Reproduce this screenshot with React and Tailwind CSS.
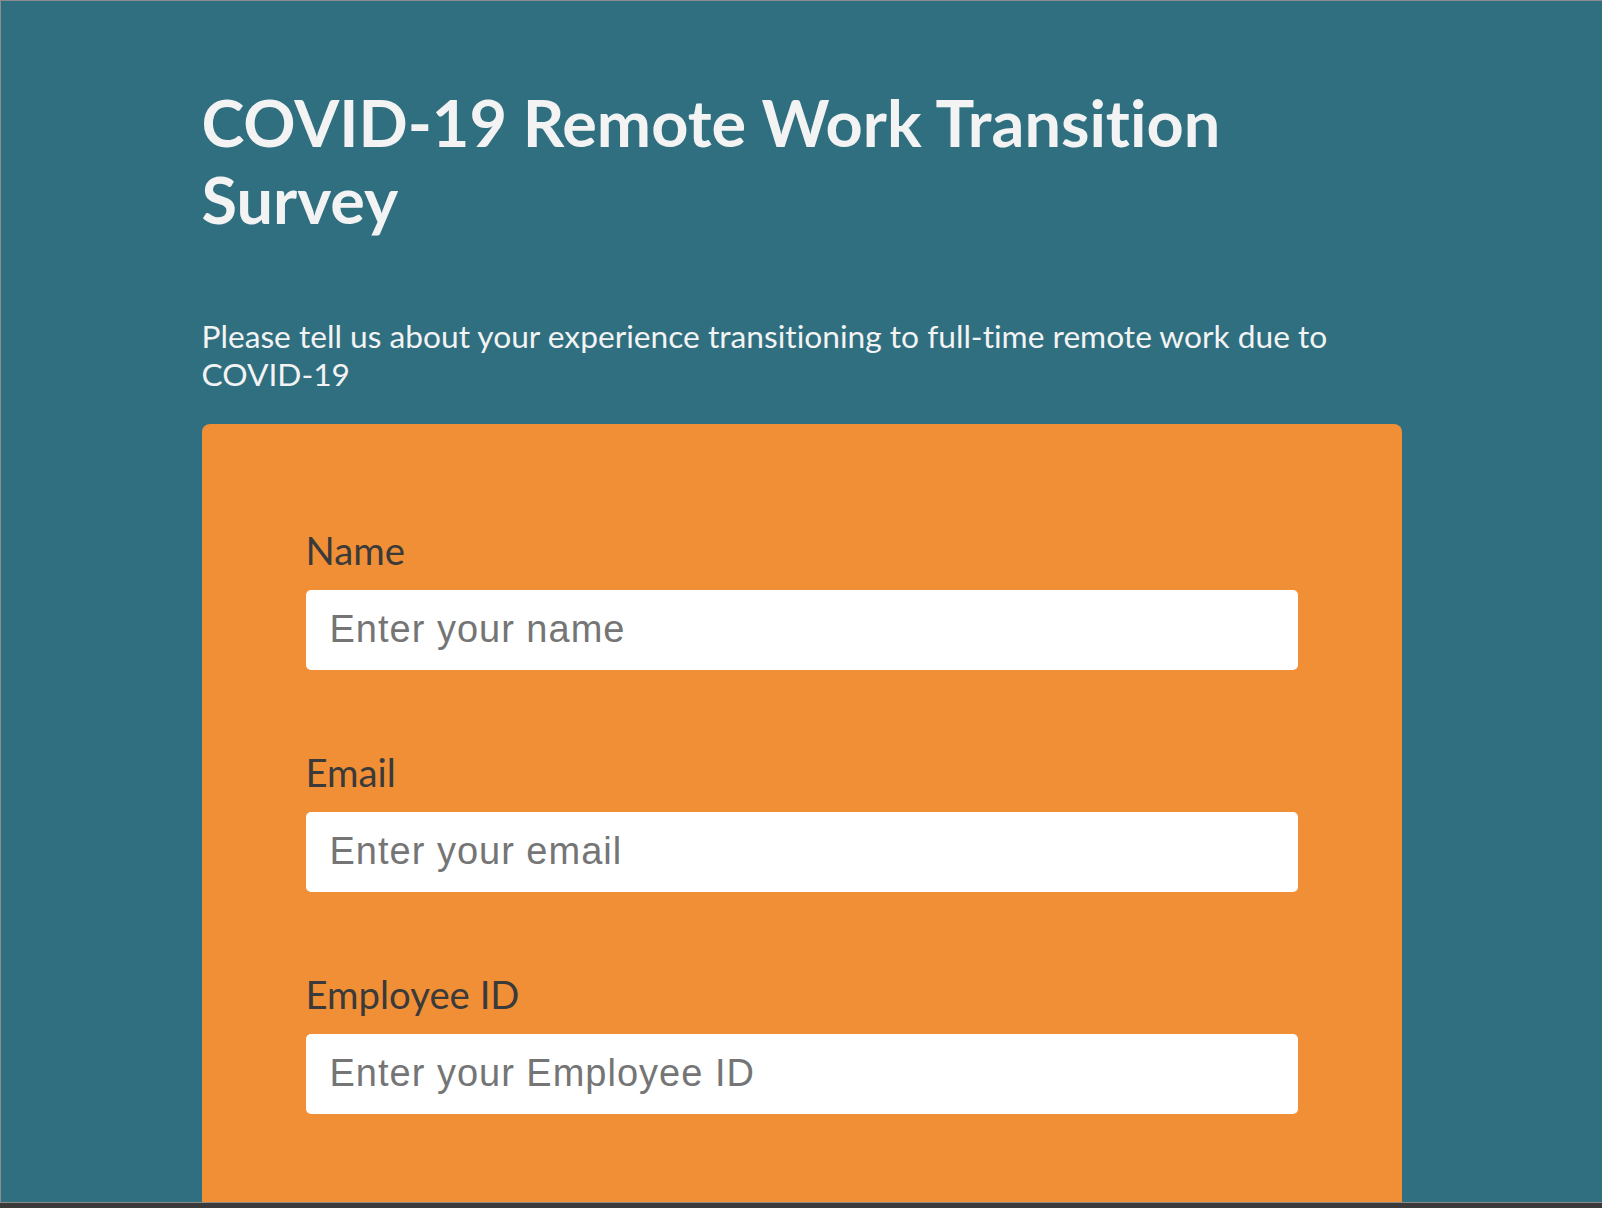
import { useState } from "react"

// Campos del formulario de la encuesta
const fields = [
  { id: "name", label: "Name", type: "text", placeholder: "Enter your name" },
  { id: "email", label: "Email", type: "email", placeholder: "Enter your email" },
  { id: "employeeId", label: "Employee ID", type: "text", placeholder: "Enter your Employee ID" },
]

function App() {
  const [values, setValues] = useState({ name: "", email: "", employeeId: "" })

  const handleChange = (e) => {
    setValues({ ...values, [e.target.id]: e.target.value })
  }

  return (
    // Marco de la ventana con barra inferior oscura
    <div className="h-[1208px] w-full bg-[#3a3a3a] overflow-hidden">
      <div className="h-[1203px] border-t border-l border-b border-[#8c8c8c] bg-[#2f6f80] overflow-hidden font-['Lato',sans-serif] [font-variant-ligatures:none]">
        <div className="max-w-[1200px] mx-auto pt-[83px]">
          {/* Titulo */}
          <h1 className="text-[64.8px] leading-[77px] font-bold text-[#f3f3f3]">
            COVID-19 Remote Work Transition Survey
          </h1>

          {/* Descripcion */}
          <p className="mt-[79px] text-[31.7px] leading-[38px] text-[#f3f3f3]">
            Please tell us about your experience transitioning to full-time remote work due to{" "}
            <span className="whitespace-nowrap">COVID-19</span>
          </p>

          {/* Tarjeta naranja con el formulario */}
          <form className="mt-[31px] bg-[#f08f36] rounded-lg px-[104px] pt-[104px] pb-[104px]">
            {fields.map((field) => (
              <div key={field.id} className="mb-[80px]">
                <label
                  htmlFor={field.id}
                  className="block text-[38.3px] leading-[1.2] text-[#3a3a3a] mb-[16px]"
                >
                  {field.label}
                </label>
                <input
                  id={field.id}
                  type={field.type}
                  value={values[field.id]}
                  onChange={handleChange}
                  placeholder={field.placeholder}
                  className="block w-full h-[80px] rounded-[5px] bg-white px-[24px] text-[38px] tracking-[1px] text-[#333] font-['Liberation_Sans',Arial,sans-serif] placeholder:text-[#757575] outline-none"
                />
              </div>
            ))}
          </form>
        </div>
      </div>
    </div>
  )
}

export default App
